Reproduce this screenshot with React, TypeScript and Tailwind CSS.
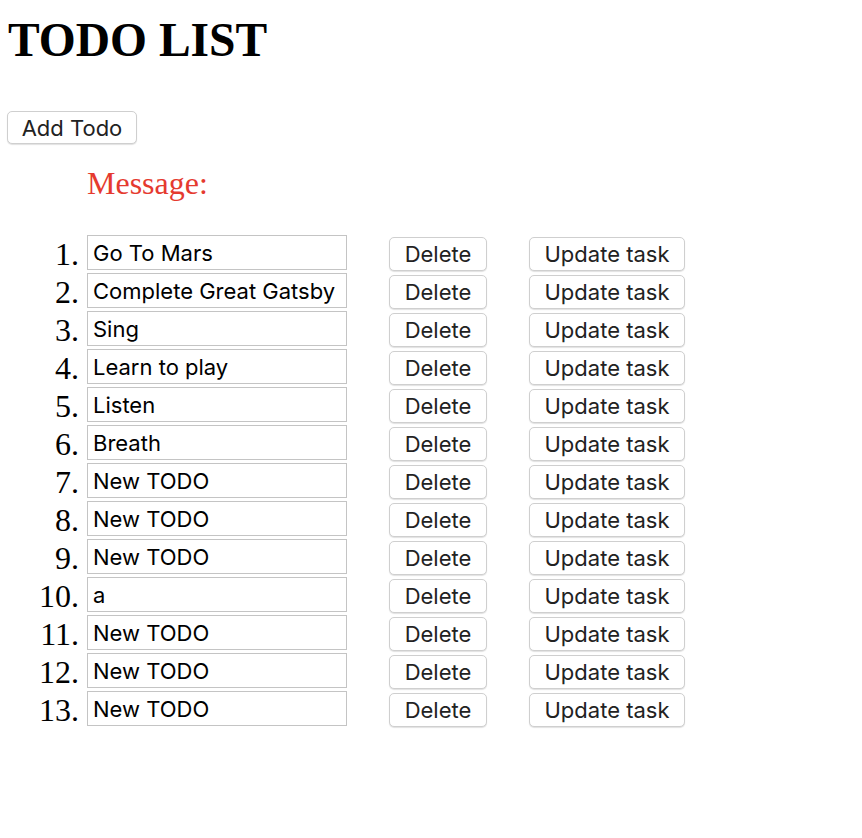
import React from 'react';

const todos = [
  'Go To Mars',
  'Complete Great Gatsby',
  'Sing',
  'Learn to play',
  'Listen',
  'Breath',
  'New TODO',
  'New TODO',
  'New TODO',
  'a',
  'New TODO',
  'New TODO',
  'New TODO',
];

const serif = "font-['Liberation_Serif','Times_New_Roman',serif]";
const sans = "font-['Inter','Liberation_Sans',sans-serif]";

const btn =
  'bg-white border border-[#cfcfcf] rounded-[5px] shadow-[0_1px_1px_rgba(0,0,0,0.12)] text-[22px] text-[#222] leading-none';

const App = () => {
  return (
    <div className="min-h-screen bg-white px-2 text-black">
      <h1 className={`${serif} pt-[16px] text-[47.5px] font-bold leading-[48px]`}>TODO LIST</h1>

      <button className={`${btn} ${sans} mt-[47px] h-[33px] w-[130px] -ml-px`}>Add Todo</button>

      <p className={`${serif} ml-[79px] mt-[21px] text-[32px] leading-[36px] text-[#e53a2f]`}>Message:</p>

      <ol className="mt-[34px] flex flex-col gap-[3px]">
        {todos.map((todo, i) => (
          <li key={i} className="flex h-[35px] items-center">
            <span className={`${serif} w-[71px] pt-[2px] text-right text-[32px] leading-none`}>{i + 1}.</span>
            <input
              defaultValue={todo}
              className={`${sans} ml-[8px] h-[35px] w-[260px] border border-[#c4c4c4] px-[5px] text-[22px] text-black outline-none`}
            />
            <button className={`${btn} ${sans} ml-[42px] mt-[2px] h-[34px] w-[98px]`}>Delete</button>
            <button className={`${btn} ${sans} ml-[42px] mt-[2px] h-[34px] w-[156px]`}>Update task</button>
          </li>
        ))}
      </ol>
    </div>
  );
};

export default App;
